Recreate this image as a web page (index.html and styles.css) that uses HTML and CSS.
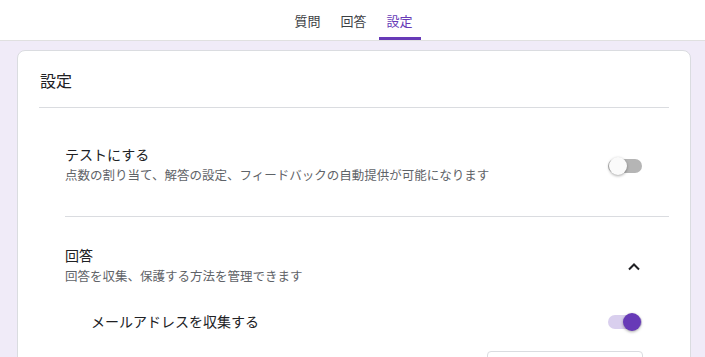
FILE: index.html
```html
<!DOCTYPE html>
<html lang="ja">
<head>
<meta charset="utf-8">
<title>設定</title>
<link rel="stylesheet" href="styles.css">
</head>
<body>
<header class="topbar">
  <nav class="tabs">
    <div class="tab">質問</div>
    <div class="tab">回答</div>
    <div class="tab active">設定</div>
  </nav>
</header>
<main class="card">
  <h1 class="card-title">設定</h1>
  <div class="section">
    <div class="row row-first">
      <div class="text">
        <div class="row-title">テストにする</div>
        <div class="row-sub">点数の割り当て、解答の設定、フィードバックの自動提供が可能になります</div>
      </div>
      <div class="toggle"><span class="track"></span><span class="knob"></span></div>
    </div>
    <div class="row row-second">
      <div class="text">
        <div class="row-title">回答</div>
        <div class="row-sub">回答を収集、保護する方法を管理できます</div>
      </div>
      <svg class="chev" width="20" height="20" viewBox="0 0 20 20"><path d="M5 12.5 L10 7.5 L15 12.5" fill="none" stroke="#202124" stroke-width="2"/></svg>
    </div>
    <div class="subrow">
      <div class="sub-title">メールアドレスを収集する</div>
      <div class="toggle on"><span class="track"></span><span class="knob"></span></div>
    </div>
    <div class="select-row">
      <div class="select"></div>
    </div>
  </div>
</main>
</body>
</html>
```
FILE: styles.css
```css
html, body {
  margin: 0;
  padding: 0;
}
body {
  background: #f0ebf8;
  font-family: Roboto, "Noto Sans CJK JP", sans-serif;
  color: #202124;
  height: 357px;
  overflow: hidden;
}
.topbar {
  background: #fff;
  height: 40px;
  border-bottom: 1px solid #e0e0e0;
  display: flex;
  justify-content: center;
}
.tabs {
  display: flex;
  gap: 4px;
  margin-left: 2px;
}
.tab {
  font-size: 13px;
  line-height: 20px;
  padding: 12px 8px 0;
  color: #3c4043;
  height: 25px;
  border-bottom: 3px solid transparent;
}
.tab.active {
  color: #673ab7;
  border-bottom-color: #673ab7;
}
.card {
  background: #fff;
  border: 1px solid #dadce0;
  border-radius: 8px;
  margin: 9px 14px 0 17px;
  padding: 21px 21px 0 21px;
  height: 400px;
}
.card-title {
  margin: 0;
  font-size: 16px;
  font-weight: 400;
  line-height: 20px;
  padding: 0 0 15px 1px;
  border-bottom: 1px solid #dadce0;
}
.section {
  padding-left: 26px;
}
.row {
  display: flex;
  justify-content: space-between;
  align-items: center;
  padding-right: 27px;
}
.row-first {
  padding-top: 37px;
  padding-bottom: 30px;
  border-bottom: 1px solid #dadce0;
}
.row-second {
  padding-top: 29px;
}
.row-title {
  font-size: 14px;
  line-height: 20px;
  color: #202124;
}
.row-sub {
  font-size: 12.5px;
  line-height: 20px;
  margin-top: 1px;
  color: #5f6368;
}
.chev {
  margin-right: -2px;
}
.subrow {
  display: flex;
  justify-content: space-between;
  align-items: center;
  padding: 25px 27px 0 26px;
}
.sub-title {
  font-size: 14px;
  line-height: 20px;
}
.toggle {
  position: relative;
  width: 34px;
  height: 20px;
}
.toggle .track {
  position: absolute;
  left: 0;
  top: 3px;
  width: 34px;
  height: 14px;
  border-radius: 7px;
  background: #b5b5b5;
}
.toggle .knob {
  position: absolute;
  left: 1px;
  top: 1px;
  width: 18px;
  height: 18px;
  border-radius: 50%;
  background: #fafafa;
  box-shadow: 0 1px 3px rgba(0,0,0,0.35);
}
.toggle.on .track {
  background: #d9cfee;
}
.toggle.on .knob {
  left: 15px;
  background: #673ab7;
}
.select-row {
  display: flex;
  justify-content: flex-end;
  padding: 19px 26px 0 0;
}
.select {
  width: 154px;
  height: 36px;
  border: 1px solid #dadce0;
  border-radius: 4px;
}
```
